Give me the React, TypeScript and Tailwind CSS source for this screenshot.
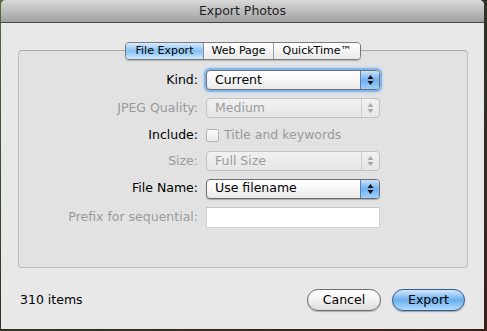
import React from "react";

function Arrows({ color }: { color: string }) {
  return (
    <svg width="7" height="12" viewBox="0 0 7 12">
      <path d="M3.5 1 L6.5 5 H0.5 Z M0.5 7 H6.5 L3.5 11 Z" fill={color} />
    </svg>
  );
}

function Popup({ value, enabled, focused }: { value: string; enabled?: boolean; focused?: boolean }) {
  if (!enabled) {
    return (
      <div className="flex h-[20px] w-[174px] items-stretch rounded-[4px] border border-[#c2c2c2] bg-gradient-to-b from-[#f1f1f1] to-[#e6e6e6] text-[#9c9c9c]">
        <div className="flex flex-1 items-center pl-[8px]">{value}</div>
        <div className="flex w-[18px] items-center justify-center border-l border-[#cfcfcf]">
          <Arrows color="#a8a8a8" />
        </div>
      </div>
    );
  }
  return (
    <div
      className={`flex h-[20px] w-[174px] items-stretch overflow-hidden rounded-[4px] border border-[#6e6e6e] bg-gradient-to-b from-white via-[#f7f7f7] to-[#e9e9e9] text-black ${
        focused ? "shadow-[0_0_0_2px_#86b5ea,0_0_2px_3px_#b7d3f3]" : "shadow-[0_1px_1px_rgba(0,0,0,0.25)]"
      }`}
    >
      <div className="flex flex-1 items-center pl-[8px]">{value}</div>
      <div className="flex w-[19px] items-center justify-center border-l border-[#5b7fb5] bg-gradient-to-b from-[#c9e3fb] via-[#6fb0ef] to-[#9fd0fb]">
        <Arrows color="#111" />
      </div>
    </div>
  );
}

function Row({ label, labelOn, mt, h, children }: { label: string; labelOn?: boolean; mt: string; h: string; children: React.ReactNode }) {
  return (
    <div className={`flex items-center ${mt} ${h}`}>
      <div className={`w-[179px] whitespace-nowrap text-right ${labelOn ? "text-black" : "text-[#9a9a9a]"}`}>{label}</div>
      <div className="ml-[8px] flex items-center">{children}</div>
    </div>
  );
}

export default function App() {
  return (
    <div className="flex h-[331px] w-[487px] bg-gradient-to-br from-[#4f6b3f] via-[#2d3325] to-[#3a1f18] pb-[2px] pl-[1px] pr-[3px] font-['DejaVu_Sans',sans-serif] text-[12.5px]">
      <div className="flex w-[483px] flex-col overflow-hidden rounded-t-[5px] bg-[#e8e8e8]">
        {/* title bar */}
        <div className="flex h-[23px] items-center justify-center border-b border-[#474747] bg-gradient-to-b from-[#d9d9d9] to-[#a1a1a1] text-[#1e1e1e]">
          Export Photos
        </div>

        <div className="flex flex-1 flex-col pl-[17px] pr-[16px] pt-[19px]">
          {/* tabs */}
          <div className="relative z-10 flex justify-center">
            <div className="flex h-[18px] overflow-hidden rounded-[4px] border border-[#7a7a7a] text-[11px] text-black shadow-[0_1px_1px_rgba(0,0,0,0.2)]">
              <div className="flex w-[77px] items-center justify-center bg-gradient-to-b from-[#d6ebfd] via-[#86c0f3] to-[#cfe8fe]">File Export</div>
              <div className="flex w-[70px] items-center justify-center border-l border-[#8e8e8e] bg-gradient-to-b from-white to-[#e9e9e9]">Web Page</div>
              <div className="flex w-[87px] items-center justify-center border-l border-[#a0a0a0] bg-gradient-to-b from-white to-[#e9e9e9]">QuickTime™</div>
            </div>
          </div>

          {/* group box */}
          <div className="-mt-[10px] flex h-[218px] flex-col rounded-[4px] border border-[#bdbdbd] border-t-[#a8a8a8] bg-[#e2e2e2]">
            <Row label="Kind:" labelOn mt="mt-[19px]" h="h-[20px]">
              <Popup value="Current" enabled focused />
            </Row>
            <Row label="JPEG Quality:" mt="mt-[8px]" h="h-[20px]">
              <Popup value="Medium" />
            </Row>
            <Row label="Include:" labelOn mt="mt-[9px]" h="h-[17px]">
              <div className="h-[13px] w-[13px] rounded-[2px] border border-[#b3b3b3] bg-gradient-to-b from-[#fbfbfb] to-[#e9e9e9]" />
              <span className="ml-[5px] text-[#9a9a9a]">Title and keywords</span>
            </Row>
            <Row label="Size:" mt="mt-[7px]" h="h-[20px]">
              <Popup value="Full Size" />
            </Row>
            <Row label="File Name:" labelOn mt="mt-[7px]" h="h-[21px]">
              <Popup value="Use filename" enabled />
            </Row>
            <Row label="Prefix for sequential:" mt="mt-[8px]" h="h-[21px]">
              <div className="h-[21px] w-[174px] border border-[#d2d2d2] border-t-[#c4c4c4] bg-white" />
            </Row>
          </div>

          {/* bottom */}
          <div className="mt-[21px] flex h-[22px] items-center">
            <span className="pl-[2px] text-black">310 items</span>
            <div className="ml-auto mr-[3px] flex gap-[11px]">
              <button className="flex h-[22px] w-[74px] items-center justify-center rounded-full border border-[#6f6f6f] bg-gradient-to-b from-white via-[#f2f2f2] to-[#dcdcdc] text-black shadow-[0_1px_1px_rgba(0,0,0,0.25)]">
                Cancel
              </button>
              <button className="flex h-[22px] w-[73px] items-center justify-center rounded-full border border-[#2f5a94] bg-gradient-to-b from-[#d2e8fc] via-[#6aaeee] to-[#b5dcfc] text-black shadow-[0_1px_1px_rgba(0,0,0,0.3)]">
                Export
              </button>
            </div>
          </div>
        </div>
      </div>
    </div>
  );
}
